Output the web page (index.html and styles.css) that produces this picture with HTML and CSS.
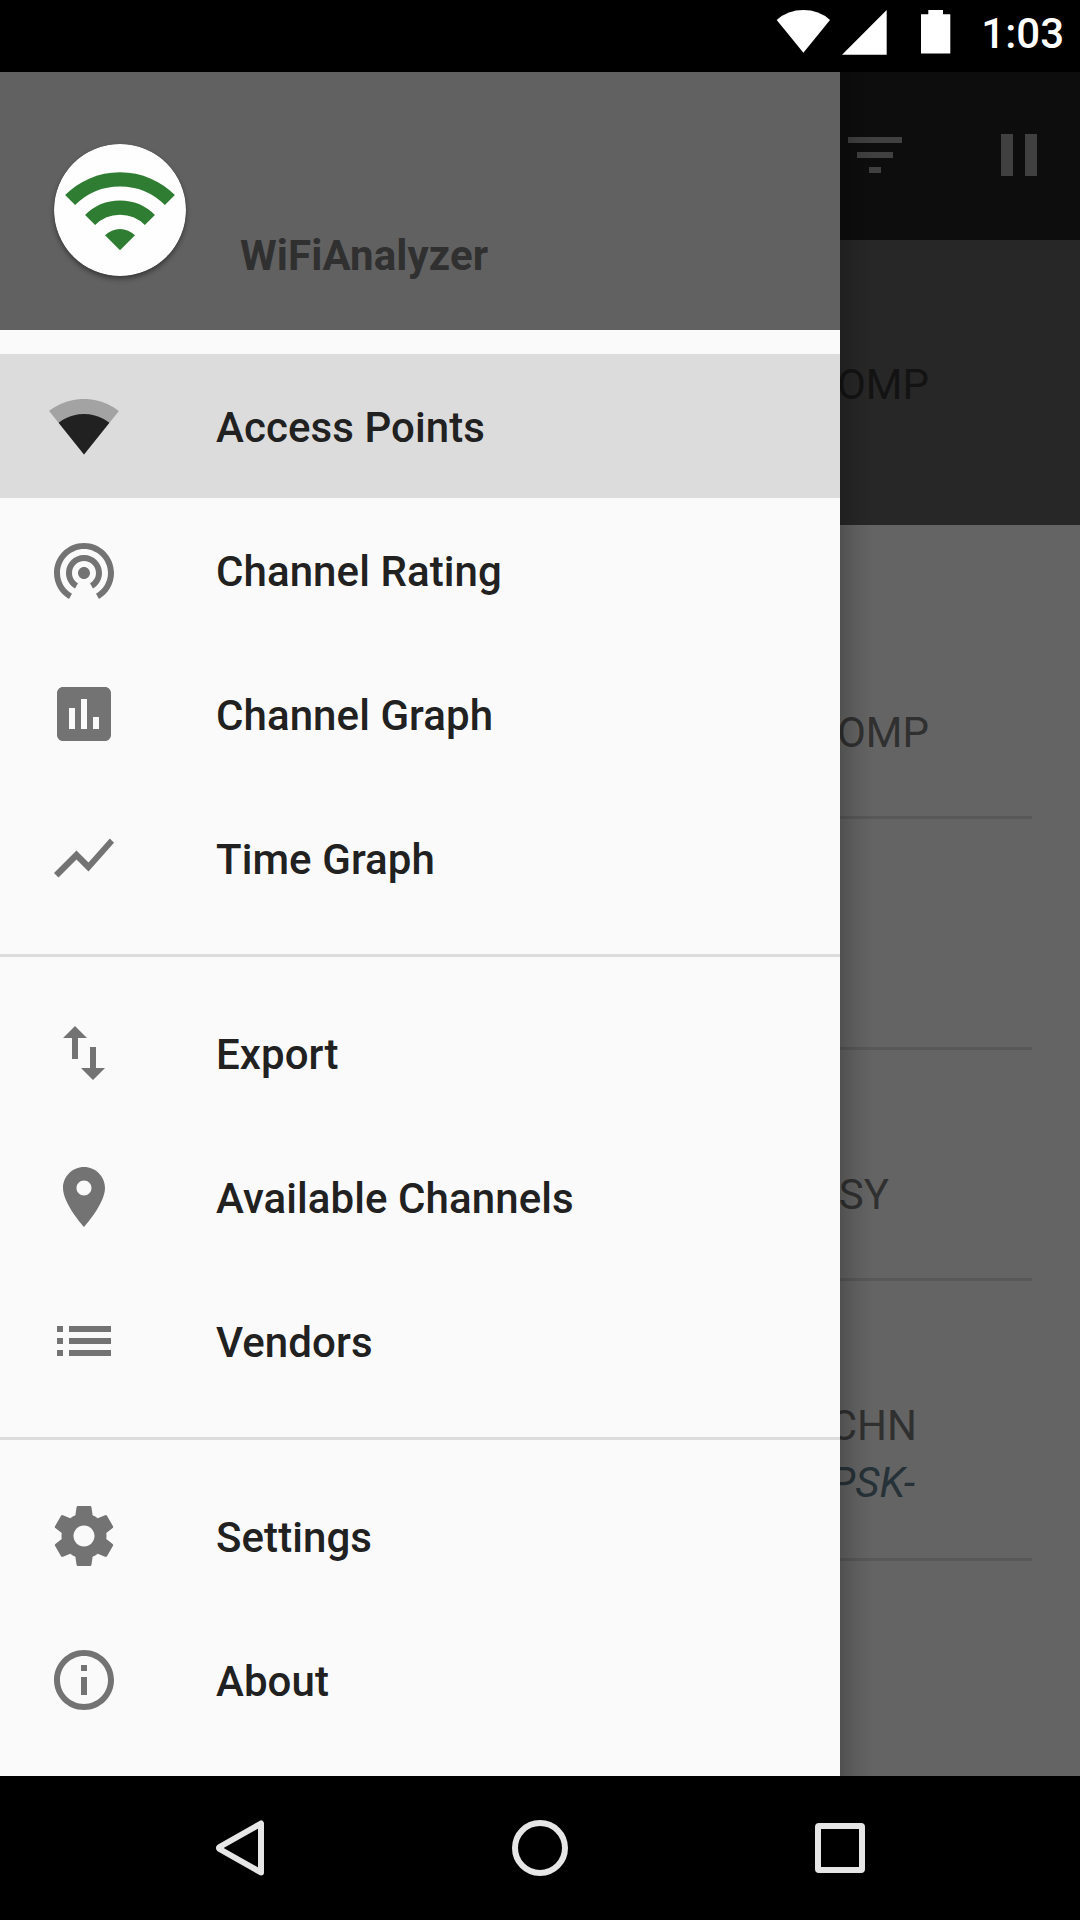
FILE: index.html
```html
<!DOCTYPE html>
<html lang="en">
<head>
<meta charset="utf-8">
<title>WiFiAnalyzer</title>
<link rel="stylesheet" href="styles.css">
</head>
<body>
<div class="screen">
  <header class="status-bar">
    <svg class="status-icons" viewBox="0 0 180 48" aria-hidden="true">
      <path d="M6.700 9.900Q18 .1 33.400 .1T60 9.900L33.400 42.800z"/>
      <path d="M72 44.700H116.700V0z"/>
      <path d="M151 4.200h7.300V.1h14.700v4.100h7.300v39.300H151z"/>
    </svg>
    <span class="clock">1:03</span>
  </header>

  <main class="app">
    <div class="toolbar">
      <svg class="icon" viewBox="0 0 24 24"><path d="M10 18h4v-2h-4v2zM3 6v2h18V6H3zm3 7h12v-2H6v2z"/></svg>
      <svg class="icon" viewBox="0 0 24 24"><path d="M6 19h4V5H6v14zm8-14v14h4V5h-4z"/></svg>
    </div>
    <section class="connection"><p class="vendor wide">OMP</p></section>
    <ul class="access-points">
      <li class="point first"><p class="vendor wide">OMP</p></li>
      <li class="point"></li>
      <li class="point"><p class="vendor short">SY</p></li>
      <li class="point tall"><p class="vendor medium">CHN</p><p class="security">PSK-</p></li>
    </ul>

    <aside class="drawer">
      <div class="drawer-header">
        <svg class="logo" viewBox="0 0 132 132">
          <circle cx="66" cy="66" r="66" fill="#fefefe"/>
          <g fill="none" stroke="#2e7d32" stroke-width="14.200">
            <path d="M16.100 56.100a70.600 70.600 0 0 1 99.800 0"/>
            <path d="M36.100 76.100a42.300 42.300 0 0 1 59.800 0"/>
          </g>
          <path d="M66 106.300L51 91.300a21.200 21.200 0 0 1 30 0z" fill="#2e7d32"/>
        </svg>
        <h1 class="app-name">WiFiAnalyzer</h1>
      </div>
      <nav class="menu">
        <ul class="group">
          <li class="item selected"><svg class="icon" viewBox="0 0 24 24"><path opacity=".3" d="M12.010 21.490L23.640 7c-.45-.34-4.930-4-11.640-4C5.280 3 .81 6.660.36 7l11.630 14.490z"/><path d="M3.530 10.950l8.470 10.550 8.470-10.550C20.040 10.620 16.810 8 12 8s-8.040 2.620-8.470 2.950z"/></svg><span class="label">Access Points</span></li>
          <li class="item"><svg class="icon" viewBox="0 0 24 24"><path d="M12 11c-1.100 0-2 .9-2 2s.9 2 2 2 2-.9 2-2-.9-2-2-2zm6 2c0-3.310-2.690-6-6-6s-6 2.690-6 6c0 2.220 1.210 4.150 3 5.190l1-1.740c-1.190-.7-2-1.970-2-3.450 0-2.210 1.790-4 4-4s4 1.790 4 4c0 1.480-.81 2.750-2 3.450l1 1.740c1.790-1.040 3-2.970 3-5.190zM12 3C6.480 3 2 7.480 2 13c0 3.700 2.010 6.920 4.990 8.650l1-1.730C5.610 18.530 4 15.960 4 13c0-4.420 3.580-8 8-8s8 3.580 8 8c0 2.960-1.610 5.530-4 6.920l1 1.730c2.990-1.730 5-4.950 5-8.650 0-5.520-4.480-10-10-10z"/></svg><span class="label">Channel Rating</span></li>
          <li class="item"><svg class="icon" viewBox="0 0 24 24"><path d="M19 3H5c-1.100 0-2 .9-2 2v14c0 1.100.9 2 2 2h14c1.100 0 2-.9 2-2V5c0-1.100-.9-2-2-2zM9 17H7v-7h2v7zm4 0h-2V7h2v10zm4 0h-2v-4h2v4z"/></svg><span class="label">Channel Graph</span></li>
          <li class="item"><svg class="icon" viewBox="0 0 24 24"><path d="M3.500 18.490l6-6.010 4 4L22 6.920l-1.410-1.410-7.090 7.970-4-4L2 16.990z"/></svg><span class="label">Time Graph</span></li>
        </ul>
        <ul class="group">
          <li class="item"><svg class="icon" viewBox="0 0 24 24"><path d="M9 3L5 6.990h3V14h2V6.990h3L9 3zm7 14.010V10h-2v7.010h-3L15 21l4-3.990h-3z"/></svg><span class="label">Export</span></li>
          <li class="item"><svg class="icon" viewBox="0 0 24 24"><path d="M12 2C8.130 2 5 5.130 5 9c0 5.250 7 13 7 13s7-7.750 7-13c0-3.870-3.130-7-7-7zm0 9.500c-1.380 0-2.500-1.120-2.500-2.500s1.120-2.500 2.500-2.500 2.500 1.120 2.500 2.500-1.120 2.500-2.500 2.500z"/></svg><span class="label">Available Channels</span></li>
          <li class="item"><svg class="icon" viewBox="0 0 24 24"><path d="M3 13h2v-2H3v2zm0 4h2v-2H3v2zm0-8h2V7H3v2zm4 4h14v-2H7v2zm0 4h14v-2H7v2zM7 7v2h14V7H7z"/></svg><span class="label">Vendors</span></li>
        </ul>
        <ul class="group">
          <li class="item"><svg class="icon" viewBox="0 0 24 24"><path d="M19.430 12.980c.04-.32.07-.64.07-.98s-.03-.66-.07-.98l2.110-1.650c.19-.15.24-.42.12-.64l-2-3.460c-.12-.22-.39-.3-.61-.22l-2.490 1c-.52-.4-1.080-.73-1.690-.98l-.38-2.650C14.460 2.180 14.250 2 14 2h-4c-.25 0-.46.18-.49.42l-.38 2.650c-.61.25-1.170.59-1.690.98l-2.490-1c-.23-.09-.49 0-.61.22l-2 3.460c-.13.22-.07.49.12.64l2.110 1.650c-.04.32-.07.65-.07.98s.03.66.07.98l-2.110 1.650c-.19.15-.24.42-.12.64l2 3.460c.12.22.39.3.61.22l2.490-1c.52.4 1.080.73 1.690.98l.38 2.650c.03.24.24.42.49.42h4c.25 0 .46-.18.49-.42l.38-2.650c.61-.25 1.170-.59 1.690-.98l2.490 1c.23.09.49 0 .61-.22l2-3.460c.12-.22.07-.49-.12-.64l-2.110-1.650zM12 15.500c-1.930 0-3.500-1.570-3.500-3.500s1.570-3.500 3.500-3.500 3.500 1.570 3.500 3.500-1.570 3.500-3.500 3.500z"/></svg><span class="label">Settings</span></li>
          <li class="item"><svg class="icon" viewBox="0 0 24 24"><path d="M11 17h2v-6h-2v6zm1-15C6.480 2 2 6.480 2 12s4.480 10 10 10 10-4.480 10-10S17.520 2 12 2zm0 18c-4.410 0-8-3.590-8-8s3.590-8 8-8 8 3.590 8 8-3.590 8-8 8zM11 9h2V7h-2v2z"/></svg><span class="label">About</span></li>
        </ul>
      </nav>
    </aside>
  </main>

  <footer class="nav-bar">
    <svg class="nav-icon" viewBox="0 0 60 60"><path d="M51 5.500V54.500L9.500 31Q8.300 30 9.500 29z"/></svg>
    <svg class="nav-icon" viewBox="0 0 60 60"><circle cx="30" cy="30" r="25"/></svg>
    <svg class="nav-icon" viewBox="0 0 60 60"><rect x="8" y="8" width="44" height="44" rx="1"/></svg>
  </footer>
</div>
</body>
</html>
```
FILE: styles.css
```css
* {
  box-sizing: border-box;
  margin: 0;
  padding: 0;
}

body {
  width: 1080px;
  height: 1920px;
  overflow: hidden;
  background: #000;
  font-family: Roboto, "Noto Sans", sans-serif;
  font-size: 42px;
  line-height: 50px;
}

ul {
  list-style: none;
}

.screen {
  display: flex;
  flex-direction: column;
  height: 1920px;
}

/* System bars */
.status-bar {
  display: flex;
  justify-content: flex-end;
  gap: 31px;
  height: 72px;
  padding: 10px 16px 0 0;
  color: #fff;
}

.status-icons {
  width: 180px;
  height: 48px;
  fill: #fff;
  overflow: visible;
}

.clock {
  font-weight: 500;
  line-height: 48px;
}

.nav-bar {
  display: flex;
  justify-content: center;
  align-items: center;
  gap: 240px;
  height: 144px;
}

.nav-icon {
  width: 60px;
  height: 60px;
  fill: none;
  stroke: #e6e6e6;
  stroke-width: 6;
  stroke-linejoin: round;
}

/* Dimmed main page */
.app {
  position: relative;
  flex: 1;
  overflow: hidden;
  background: #646464;
  color: #303030;
}

.icon {
  flex: none;
  width: 72px;
  height: 72px;
  fill: #737373;
}

.toolbar {
  display: flex;
  justify-content: flex-end;
  gap: 72px;
  height: 168px;
  padding: 47px 25px 0 0;
  background: #0d0d0d;
}

.toolbar .icon {
  fill: #404040;
}

.connection {
  height: 285px;
  padding-top: 120px;
  background: #272727;
  color: #131313;
}

.access-points {
  padding: 0 48px;
}

.point {
  height: 231px;
  padding-top: 120px;
  border-bottom: 3px solid #585858;
}

.point.first {
  height: 294px;
  padding-top: 183px;
}

.point.tall {
  height: 280px;
}

.vendor,
.security {
  text-align: right;
}

.connection .wide {
  padding-right: 151px;
}

.point .wide {
  padding-right: 103px;
}

.short {
  padding-right: 143px;
}

.medium {
  padding-right: 115px;
}

.security {
  padding: 7px 117px 0 0;
  color: #263238;
  font-style: italic;
}

/* Navigation drawer, laid over the page */
.drawer {
  position: absolute;
  inset: 0 240px 0 0;
  background: #fafafa;
}

.drawer::after {
  content: "";
  position: absolute;
  inset: 0 -34px 0 auto;
  width: 34px;
  background: linear-gradient(to right, rgba(0, 0, 0, .2), rgba(0, 0, 0, .07) 50%, transparent);
}

.drawer-header {
  display: flex;
  gap: 54px;
  height: 258px;
  padding: 71.500px 0 0 54px;
  background: #616161;
}

.logo {
  width: 132px;
  height: 132px;
  border-radius: 50%;
  box-shadow: 0 3px 5px rgba(0, 0, 0, .4);
}

.app-name {
  padding-top: 87px;
  color: #303030;
  font-size: 42px;
  font-weight: 700;
  letter-spacing: .1px;
}

.group {
  padding: 24px 0;
}

.group + .group {
  border-top: 3px solid #dcdcdc;
}

.item {
  display: flex;
  align-items: center;
  gap: 96px;
  height: 144px;
  padding-left: 48px;
}

.label {
  padding-top: 3px;
  color: #212121;
  font-weight: 500;
  letter-spacing: .08px;
}

.selected {
  background: #dcdcdc;
}

.selected .icon {
  fill: #212121;
}
```
